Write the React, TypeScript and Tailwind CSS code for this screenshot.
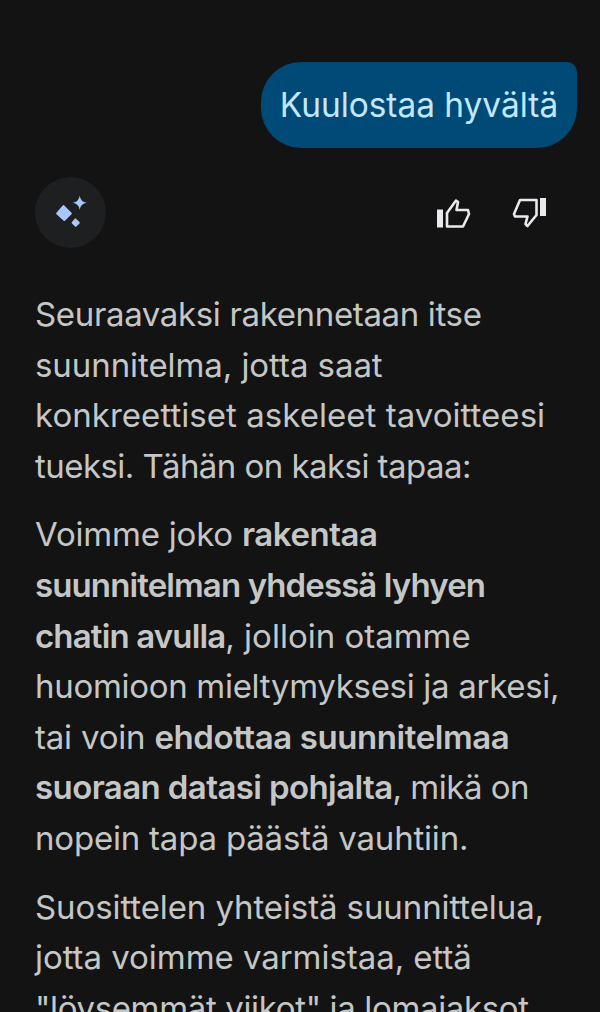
export default function App() {
  return (
    <div className="h-[1012px] w-[600px] overflow-hidden bg-[#131314] font-['Inter','Noto_Sans',sans-serif]">
      <div className="flex justify-end pt-[62px] pr-[23px]">
        <div className="flex h-[86px] w-[316px] items-center justify-center rounded-[40px] rounded-tr-[10px] bg-[#004a77] text-[33.4px] text-[#c2e7ff]">
          Kuulostaa hyvältä
        </div>
      </div>

      <div className="mt-[29px] flex items-center justify-between pl-[35px] pr-[53px]">
        <div className="flex h-[71px] w-[71px] items-center justify-center rounded-full bg-[#1e1f20]">
          <svg width="71" height="71" viewBox="0 0 71 71" fill="#a8c7fa">
            <path d="M29.3 28.5 L36.5 35.7 Q37.3 36.5 36.5 37.3 L30.5 43.3 Q29.3 44.5 28.1 43.3 L21.5 37.3 Q20.7 36.5 21.5 35.7 L27.7 28.5 Q28.5 27.7 29.3 28.5 Z" />
            <path d="M40.7 41.5 L44.5 45 Q45 45.7 44.5 46.4 L41.4 49.5 Q40.7 50 40 49.5 L36.9 46.4 Q36.4 45.7 36.9 45 L40 41.5 Q40.4 41.2 40.7 41.5 Z" />
            <path d="M44.7 18.7 Q45.6 24.8 51.7 25.7 Q45.6 26.6 44.7 32.7 Q43.8 26.6 37.7 25.7 Q43.8 24.8 44.7 18.7 Z" />
          </svg>
        </div>
        <div className="flex items-center gap-[39px]">
          <svg width="36" height="32" viewBox="0 0 36 32" fill="none">
            <rect x="1" y="12.5" width="6" height="18" fill="#e8eaed" />
            <path d="M11 29.5 V16 L20 3.5 L22 5 L20.5 13 H32 L33 17 L27 29.5 Z" stroke="#e8eaed" strokeWidth="2.6" strokeLinejoin="round" />
          </svg>
          <svg width="36" height="32" viewBox="0 0 36 32" fill="none">
            <rect x="29" y="1" width="6" height="18" fill="#e8eaed" />
            <path d="M25.5 3 H9 L3 17 L4 19.5 H16.5 L14.5 27 L16.5 29 L25.5 18 Z" stroke="#e8eaed" strokeWidth="2.6" strokeLinejoin="round" />
          </svg>
        </div>
      </div>

      <div className="mt-[41px] flex flex-col gap-[18px] pl-[35px] text-[33px] leading-[50.6px] tracking-[-0.2px] text-[#c4c7c5]">
        <p>
          <span className="tracking-[-0.35px]">Seuraavaksi rakennetaan itse</span>
          <br />
          <span className="tracking-[-0.07px]">suunnitelma, jotta saat</span>
          <br />
          <span className="tracking-[0.04px]">konkreettiset askeleet tavoitteesi</span>
          <br />
          <span className="tracking-[-0.55px]">tueksi. Tähän on kaksi tapaa:</span>
        </p>
        <p>
          Voimme joko <b className="font-semibold tracking-[-0.47px]">rakentaa</b>
          <br />
          <b className="font-semibold tracking-[-0.89px]">suunnitelman yhdessä lyhyen</b>
          <br />
          <b className="font-semibold tracking-[-0.85px]">chatin avulla</b>
          <span className="tracking-[0px]">, jolloin otamme</span>
          <br />
          <span className="tracking-[-0.3px]">huomioon mieltymyksesi ja arkesi,</span>
          <br />
          tai voin <b className="font-semibold tracking-[-0.42px]">ehdottaa suunnitelmaa</b>
          <br />
          <b className="font-semibold tracking-[-0.6px]">suoraan datasi pohjalta</b>
          <span className="tracking-[-0.5px]">, mikä on</span>
          <br />
          nopein tapa päästä vauhtiin.
        </p>
        <p>
          <span className="tracking-[-0.1px]">Suosittelen yhteistä suunnittelua,</span>
          <br />
          <span className="tracking-[-0.05px]">jotta voimme varmistaa, että</span>
          <br />
          <span className="tracking-[-0.35px]">"löysemmät viikot" ja lomajaksot</span>
        </p>
      </div>
    </div>
  );
}
